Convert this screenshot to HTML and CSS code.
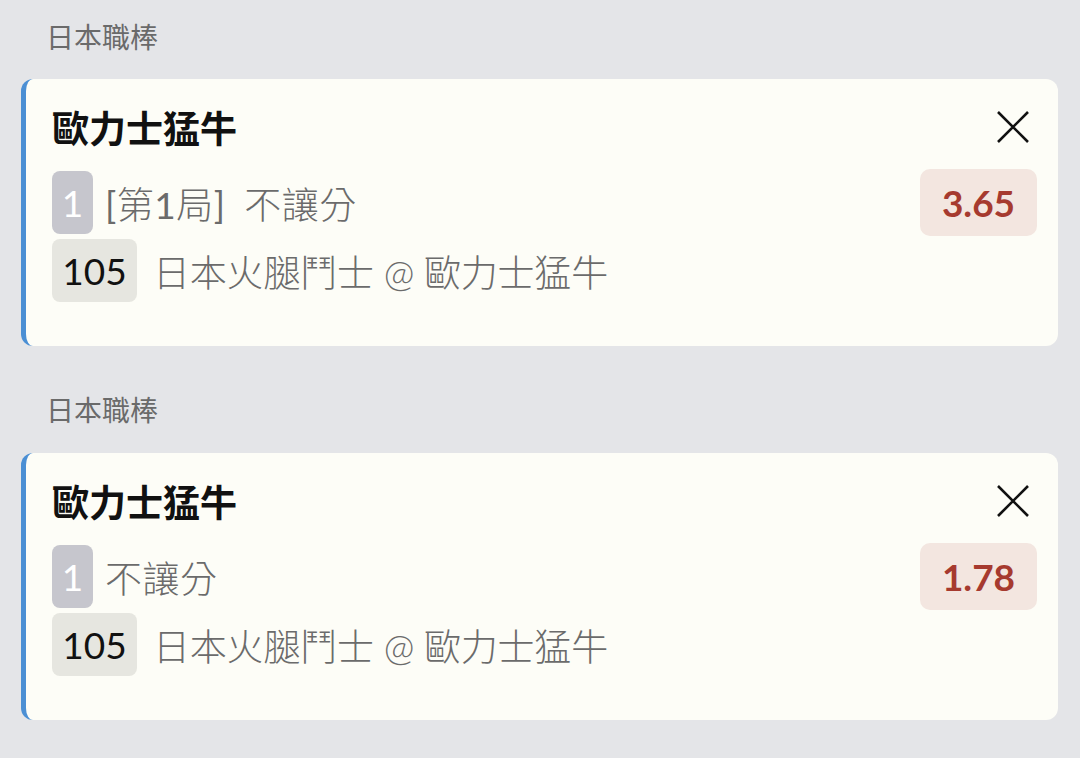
FILE: index.html
```html
<!DOCTYPE html>
<html lang="zh-Hant">
<head>
<meta charset="utf-8">
<link rel="stylesheet" href="styles.css">
</head>
<body>
<div class="list">
  <section class="group">
    <div class="league">日本職棒</div>
    <div class="card">
      <div class="head">
        <div class="title">歐力士猛牛</div>
        <button class="close" aria-label="close">
          <svg viewBox="0 0 34 34" width="34" height="34"><path d="M2 2 L32 32 M32 2 L2 32" stroke="#111" stroke-width="2.6" fill="none"/></svg>
        </button>
      </div>
      <div class="row">
        <span class="num">1</span>
        <span class="bet"><span class="lat">[</span>第<span class="lat">1</span>局<span class="lat">]</span> 不讓分</span>
        <span class="odds">3.65</span>
      </div>
      <div class="row">
        <span class="code">105</span>
        <span class="match">日本火腿鬥士 @ 歐力士猛牛</span>
      </div>
    </div>
  </section>
  <section class="group">
    <div class="league">日本職棒</div>
    <div class="card">
      <div class="head">
        <div class="title">歐力士猛牛</div>
        <button class="close" aria-label="close">
          <svg viewBox="0 0 34 34" width="34" height="34"><path d="M2 2 L32 32 M32 2 L2 32" stroke="#111" stroke-width="2.6" fill="none"/></svg>
        </button>
      </div>
      <div class="row">
        <span class="num">1</span>
        <span class="bet">不讓分</span>
        <span class="odds">1.78</span>
      </div>
      <div class="row">
        <span class="code">105</span>
        <span class="match">日本火腿鬥士 @ 歐力士猛牛</span>
      </div>
    </div>
  </section>
</div>
</body>
</html>
```
FILE: styles.css
```css
* { box-sizing: border-box; }
html, body {
  margin: 0;
  padding: 0;
  background: #e4e5e8;
  width: 1080px;
  height: 758px;
  overflow: hidden;
  font-family: Lato, "Noto Sans CJK TC", sans-serif;
}
.list {
  display: flex;
  flex-direction: column;
}
.group {
  display: flex;
  flex-direction: column;
  padding: 0 22px 0 21px;
}
.league {
  height: 79px;
  line-height: 74px;
  padding-left: 25px;
  font-size: 28px;
  color: #6a6a6a;
}
.group + .group .league {
  height: 107px;
  line-height: 128px;
}
.card {
  background: #fdfdf7;
  border-left: 5px solid #4b8fd4;
  border-radius: 12px;
  padding: 24px 21px 44px 26px;
  display: flex;
  flex-direction: column;
  height: 267px;
}
.head {
  display: flex;
  align-items: center;
  justify-content: space-between;
  height: 48px;
  margin-bottom: 20px;
}
.title {
  font-size: 37px;
  font-weight: 700;
  color: #111;
}
.close {
  border: 0;
  background: none;
  padding: 0;
  margin-right: 7px;
  width: 34px;
  height: 34px;
  display: flex;
}
.row {
  display: flex;
  align-items: center;
  height: 63px;
  margin-bottom: 5px;
}
.num {
  width: 41px;
  height: 63px;
  border-radius: 8px;
  background: #c6c6cd;
  color: #fff;
  font-size: 37px;
  display: flex;
  align-items: center;
  justify-content: center;
}
.bet {
  margin-left: 12px;
  font-size: 37px;
  font-weight: 300;
  color: #6b6b6b;
  word-spacing: 8px;
  letter-spacing: 0.5px;
  flex: 1;
}
.lat {
  font-weight: 400;
}
.odds {
  width: 117px;
  height: 67px;
  border-radius: 10px;
  background: #f3e6e0;
  color: #a63a2f;
  font-size: 37px;
  font-weight: 700;
  display: flex;
  align-items: center;
  justify-content: center;
}
.code {
  width: 85px;
  height: 63px;
  border-radius: 8px;
  background: #e6e6e0;
  color: #111;
  font-size: 37px;
  display: flex;
  align-items: center;
  justify-content: center;
}
.match {
  margin-left: 16px;
  font-size: 37px;
  font-weight: 300;
  color: #6b6b6b;
  letter-spacing: -0.2px;
}
```
